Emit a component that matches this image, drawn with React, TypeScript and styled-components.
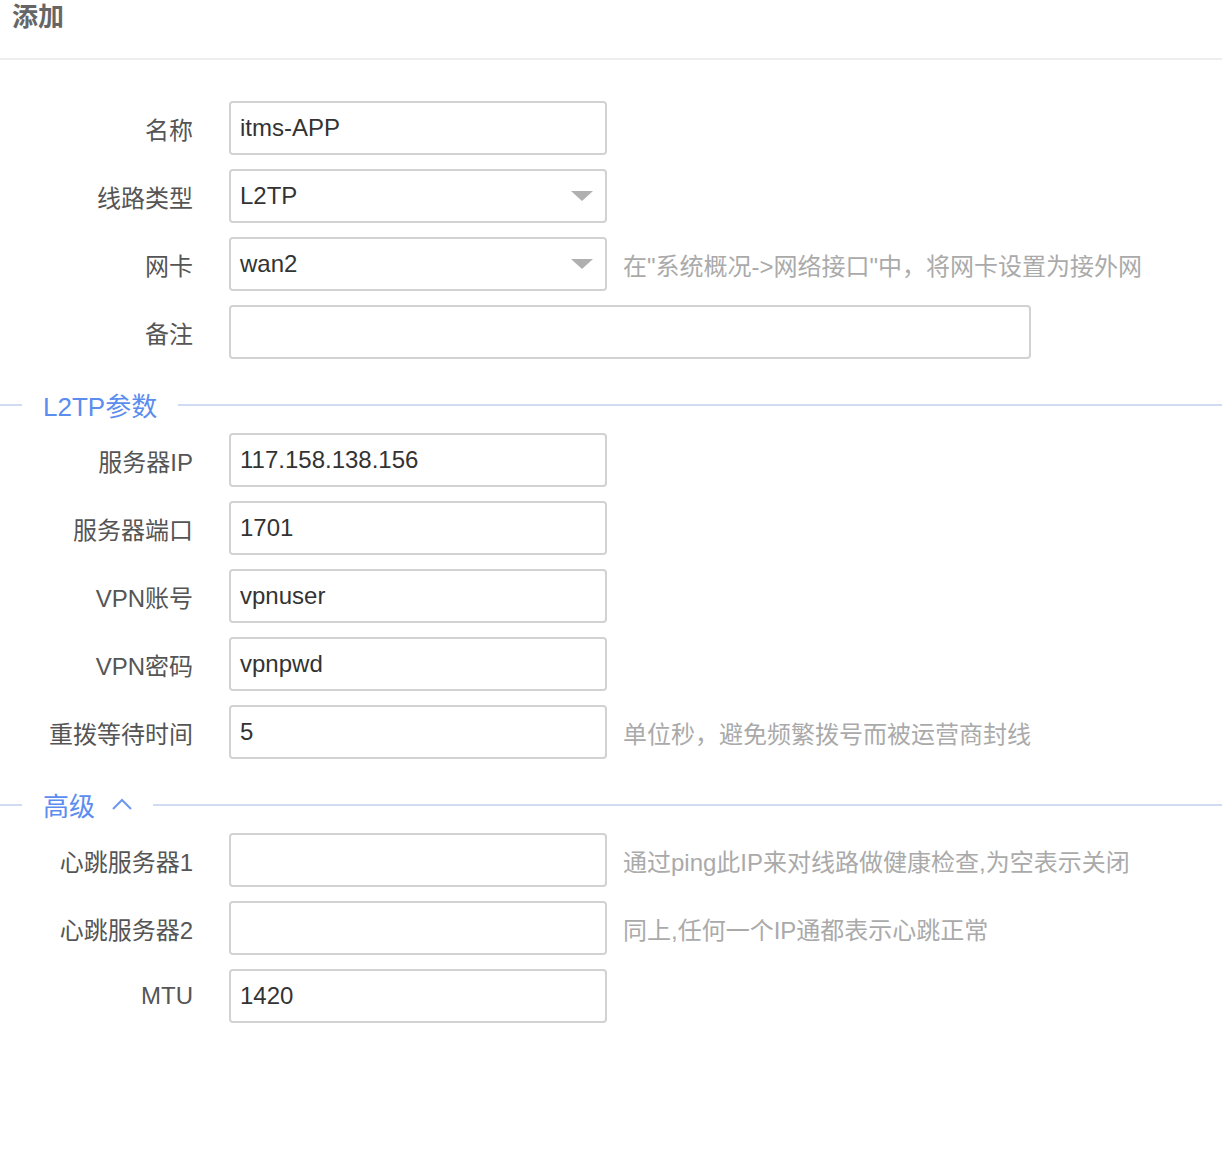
import styled, { createGlobalStyle } from "styled-components";

const GlobalStyle = createGlobalStyle`
  html, body {
    margin: 0;
    padding: 0;
    background: #ffffff;
  }
  body {
    font-family: "Liberation Sans", "Noto Sans CJK SC", sans-serif;
  }
`;

const Page = styled.div`
  width: 1222px;
  min-height: 1168px;
  background: #fff;
`;

const Header = styled.div`
  height: 58px;
  padding: 0 12px;
  border-bottom: 2px solid #eeeeee;
`;

const Title = styled.div`
  font-size: 26px;
  line-height: 34px;
  font-weight: 600;
  color: #666;
`;

const Form = styled.div`
  padding-top: 41px;
`;

const Row = styled.div`
  display: flex;
  align-items: center;
  height: 54px;
  margin-bottom: 14px;
`;

const Label = styled.div`
  width: 193px;
  margin-right: 36px;
  text-align: right;
  font-size: 24px;
  color: #555;
  white-space: nowrap;
`;

const Input = styled.div<{ $wide?: boolean }>`
  box-sizing: border-box;
  position: relative;
  width: ${({ $wide }) => ($wide ? "802px" : "378px")};
  height: 54px;
  border: 2px solid #d2d2d2;
  border-radius: 4px;
  padding: 0 9px;
  display: flex;
  align-items: center;
  font-size: 24px;
  color: #333;
`;

const Arrow = styled.span`
  position: absolute;
  right: 12px;
  top: 20px;
  width: 0;
  height: 0;
  border-left: 11px solid transparent;
  border-right: 11px solid transparent;
  border-top: 10px solid #b0b0b0;
`;

const Hint = styled.div`
  margin-left: 16px;
  font-size: 24px;
  color: #aaa;
  white-space: nowrap;
`;

const Section = styled.div`
  box-sizing: border-box;
  height: 60px;
  padding-top: 2px;
  display: flex;
  align-items: center;
`;

const SectionLine = styled.div<{ $grow?: boolean }>`
  height: 2px;
  margin-top: 2px;
  background: #cfdcf2;
  width: ${({ $grow }) => ($grow ? "auto" : "22px")};
  flex: ${({ $grow }) => ($grow ? "1" : "none")};
`;

const SectionTitle = styled.div`
  margin: 0 21px;
  font-size: 26px;
  color: #5b8def;
  display: flex;
  align-items: center;
  gap: 17px;
`;

const Chevron = () => (
  <svg width="20" height="12" viewBox="0 0 20 12" fill="none">
    <path d="M1 11 L10 2 L19 11" stroke="#6b98ee" strokeWidth="2" />
  </svg>
);

interface FieldProps {
  label: string;
  value?: string;
  select?: boolean;
  wide?: boolean;
  hint?: string;
}

const Field = ({ label, value, select, wide, hint }: FieldProps) => (
  <Row>
    <Label>{label}</Label>
    <Input $wide={wide}>
      {value}
      {select && <Arrow />}
    </Input>
    {hint && <Hint>{hint}</Hint>}
  </Row>
);

export default function App() {
  return (
    <Page>
      <GlobalStyle />
      <Header>
        <Title>添加</Title>
      </Header>
      <Form>
        <Field label="名称" value="itms-APP" />
        <Field label="线路类型" value="L2TP" select />
        <Field
          label="网卡"
          value="wan2"
          select
          hint={"在\"系统概况->网络接口\"中，将网卡设置为接外网"}
        />
        <Field label="备注" wide />
        <Section>
          <SectionLine />
          <SectionTitle>L2TP参数</SectionTitle>
          <SectionLine $grow />
        </Section>
        <Field label="服务器IP" value="117.158.138.156" />
        <Field label="服务器端口" value="1701" />
        <Field label="VPN账号" value="vpnuser" />
        <Field label="VPN密码" value="vpnpwd" />
        <Field
          label="重拨等待时间"
          value="5"
          hint="单位秒，避免频繁拨号而被运营商封线"
        />
        <Section>
          <SectionLine />
          <SectionTitle>
            高级
            <Chevron />
          </SectionTitle>
          <SectionLine $grow />
        </Section>
        <Field
          label="心跳服务器1"
          hint="通过ping此IP来对线路做健康检查,为空表示关闭"
        />
        <Field label="心跳服务器2" hint="同上,任何一个IP通都表示心跳正常" />
        <Field label="MTU" value="1420" />
      </Form>
    </Page>
  );
}
